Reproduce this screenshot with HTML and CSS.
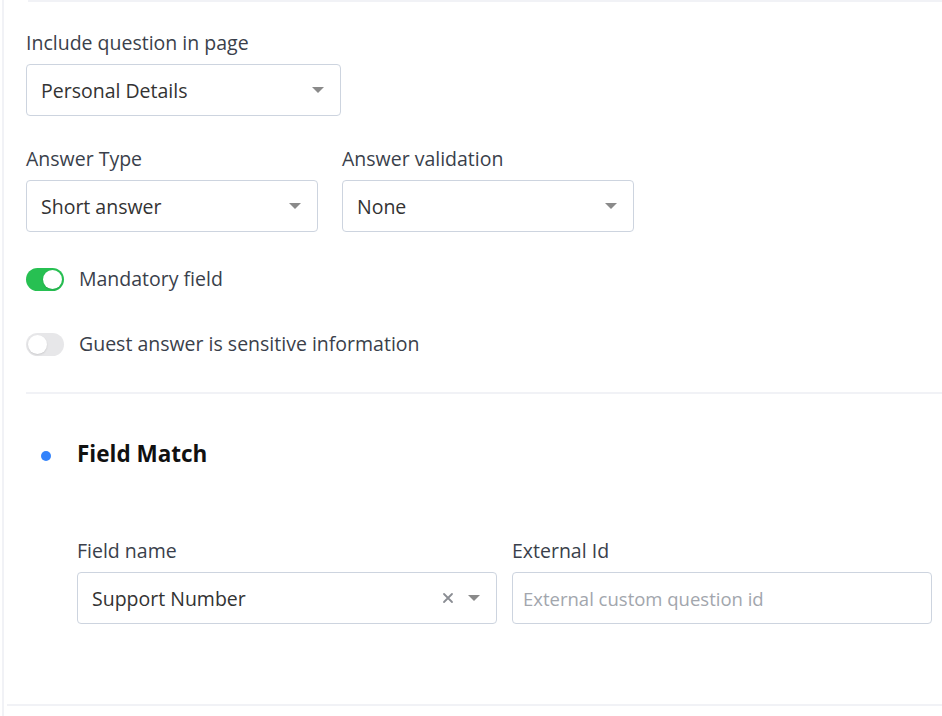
FILE: index.html
```html
<!DOCTYPE html>
<html lang="en">

<head>
    <meta charset="UTF-8">
    <meta name="viewport" content="width=device-width, initial-scale=1.0">
    <title>Question Settings</title>
    <link rel="stylesheet" href="styles.css">
</head>

<body>
    <div class="panel">
        <div class="top-rule"></div>

        <div class="field">
            <label class="label">Include question in page</label>
            <div class="select w-page">
                <span class="value">Personal Details</span>
                <span class="caret"></span>
            </div>
        </div>

        <div class="row">
            <div class="field">
                <label class="label">Answer Type</label>
                <div class="select w-half">
                    <span class="value">Short answer</span>
                    <span class="caret"></span>
                </div>
            </div>
            <div class="field">
                <label class="label">Answer validation</label>
                <div class="select w-half">
                    <span class="value">None</span>
                    <span class="caret"></span>
                </div>
            </div>
        </div>

        <div class="switch-row first">
            <span class="switch on"><span class="knob"></span></span>
            <span class="switch-label">Mandatory field</span>
        </div>
        <div class="switch-row">
            <span class="switch"><span class="knob"></span></span>
            <span class="switch-label">Guest answer is sensitive information</span>
        </div>

        <div class="divider"></div>

        <div class="section">
            <h2 class="section-title"><span class="dot"></span>Field Match</h2>
            <div class="row match">
                <div class="field">
                    <label class="label">Field name</label>
                    <div class="select w-wide">
                        <span class="value">Support Number</span>
                        <span class="clear">
                            <svg width="12" height="12" viewBox="0 0 12 12">
                                <path d="M2 2 L10 10 M10 2 L2 10" stroke="#8a8d93" stroke-width="1.8" stroke-linecap="round" />
                            </svg>
                        </span>
                        <span class="caret"></span>
                    </div>
                </div>
                <div class="field">
                    <label class="label">External Id</label>
                    <input class="input w-wide" type="text" placeholder="External custom question id">
                </div>
            </div>
        </div>

        <div class="bottom-rule"></div>
    </div>
</body>

</html>
```

FILE: styles.css
```css
body {
    margin: 0;
    background: #fff;
    font-family: "Open Sans", Arial, sans-serif;
    color: #3a3f4b;
}

.panel {
    margin-left: 2px;
    border-left: 2px solid #f1f2f6;
    min-height: 716px;
    box-sizing: border-box;
    padding-left: 20px;
}

.top-rule {
    height: 2px;
    margin-left: 4px;
    background: #f1f2f6;
}

.field {
    display: flex;
    flex-direction: column;
}

.label {
    font-size: 19.5px;
    line-height: 24px;
    color: #3a3f4b;
    margin-bottom: 9px;
}

.panel > .field {
    margin-top: 29px;
    margin-left: 2px;
}

.row {
    display: flex;
    gap: 24px;
    margin-top: 31px;
    margin-left: 2px;
}

.select,
.input {
    box-sizing: border-box;
    height: 52px;
    border: 1px solid #cdd4df;
    border-radius: 4px;
    background: #fff;
    display: flex;
    align-items: center;
    padding: 0 16px 0 14px;
    font-family: "Open Sans", Arial, sans-serif;
    font-size: 19.5px;
    color: #333;
}

.select .value {
    flex: 1;
}

.caret {
    width: 0;
    height: 0;
    border-left: 6px solid transparent;
    border-right: 6px solid transparent;
    border-top: 6px solid #8a8a8a;
}

.clear {
    display: flex;
    margin-right: 14px;
}

.input {
    outline: none;
    padding-left: 10px;
    font-size: 18.5px;
}

.input::placeholder {
    color: #a2a6ad;
}

.w-page {
    width: 315px;
}

.w-half {
    width: 292px;
}

.w-wide {
    width: 420px;
}

.switch-row {
    display: flex;
    align-items: center;
    gap: 15px;
    margin-left: 2px;
    margin-top: 41px;
}

.switch-row.first {
    margin-top: 35px;
}

.switch {
    width: 38px;
    height: 23px;
    border-radius: 12px;
    background: #e7e7e9;
    position: relative;
    box-sizing: border-box;
}

.knob {
    position: absolute;
    top: 2px;
    left: 2px;
    width: 19px;
    height: 19px;
    border-radius: 50%;
    background: #fff;
    box-shadow: 0 1px 2px rgba(0, 0, 0, 0.12);
}

.switch.on {
    background: #27c052;
}

.switch.on .knob {
    left: 17px;
}

.switch-label {
    font-size: 19.5px;
    line-height: 24px;
    color: #3a3f4b;
}

.divider {
    height: 2px;
    background: #f1f2f6;
    margin-top: 36px;
    margin-left: 2px;
}

.section {
    padding-left: 17px;
}

.section-title {
    display: flex;
    align-items: center;
    margin: 46px 0 0;
    font-size: 22.5px;
    font-weight: 700;
    color: #111;
    line-height: 28px;
}

.dot {
    width: 10px;
    height: 10px;
    border-radius: 50%;
    background: #3383fb;
    margin-right: 26px;
    margin-top: 3px;
}

.row.match {
    gap: 15px;
    margin-top: 71px;
    margin-left: 36px;
}

.bottom-rule {
    height: 2px;
    background: #f1f2f6;
    margin-top: 80px;
    margin-left: -17px;
}
```
